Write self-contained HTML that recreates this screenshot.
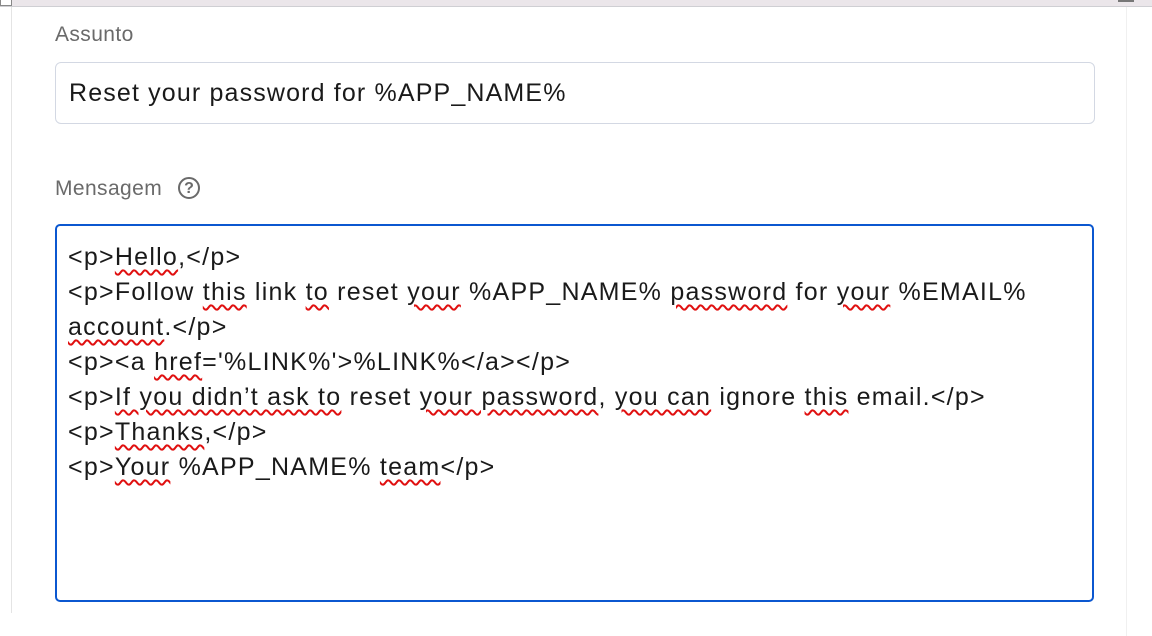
<!DOCTYPE html>
<html><head><meta charset="utf-8"><style>
html,body{margin:0;padding:0;width:1152px;height:636px;background:#fff;overflow:hidden;position:relative;font-family:"Liberation Sans",Arial,sans-serif;}
.top{position:absolute;left:0;top:0;width:1152px;height:6px;background:#ebe6ea;border-bottom:1px solid #cfcfd3;}
.tl{position:absolute;left:0;top:0;width:10px;height:5px;border:1px solid #888;border-top:none;background:#fff;}
.tr{position:absolute;left:1118px;top:0;width:16px;height:2px;background:#777;}
.vl{position:absolute;left:11px;top:7px;width:1px;height:606px;background:#e4e4e4;}
.vr{position:absolute;left:1126px;top:7px;width:1px;height:629px;background:#f0f0f0;}
.lbl{position:absolute;left:55px;font-size:21px;letter-spacing:0.4px;color:#6a6a6a;}
.inp{position:absolute;left:55px;top:62px;width:1038px;height:60px;border:1px solid #d3d8e3;border-radius:6px;box-sizing:content-box;}
.inp span{position:absolute;left:13px;top:16px;font-size:25px;letter-spacing:1.15px;color:#1a1a1a;}
.ta{position:absolute;left:55px;top:224px;width:1035px;height:374px;border:2.5px solid #0b57d0;border-radius:5px;}
.ta div{position:absolute;left:11px;top:14px;font-size:25px;letter-spacing:1.25px;line-height:35px;color:#1a1a1a;white-space:pre;}
.s{text-decoration:underline wavy #e01010;text-decoration-thickness:1.5px;text-underline-offset:4px;}
.help{position:absolute;left:178px;top:177px;width:22px;height:22px;border:2px solid #6a6a6a;border-radius:50%;box-sizing:border-box;font-size:16px;font-weight:bold;color:#6a6a6a;text-align:center;line-height:19px;}
</style></head><body>
<div class="top"></div><div class="tl"></div><div class="tr"></div>
<div class="vl"></div><div class="vr"></div>
<div class="lbl" style="top:23px">Assunto</div>
<div class="inp"><span>Reset your password for %APP_NAME%</span></div>
<div class="lbl" style="top:177px">Mensagem</div>
<div class="help">?</div>
<div class="ta"><div>&lt;p&gt;<span class="s">Hello</span>,&lt;/p&gt;
&lt;p&gt;Follow <span class="s">this</span> link <span class="s">to</span> reset <span class="s">your</span> %APP_NAME% <span class="s">password</span> for <span class="s">your</span> %EMAIL%
<span class="s">account</span>.&lt;/p&gt;
&lt;p&gt;&lt;a <span class="s">href</span>='%LINK%'&gt;%LINK%&lt;/a&gt;&lt;/p&gt;
&lt;p&gt;<span class="s">If you didn’t ask to</span> reset <span class="s">your password</span>, <span class="s">you can</span> ignore <span class="s">this</span> email.&lt;/p&gt;
&lt;p&gt;<span class="s">Thanks</span>,&lt;/p&gt;
&lt;p&gt;<span class="s">Your</span> %APP_NAME% <span class="s">team</span>&lt;/p&gt;</div></div>
</body></html>
